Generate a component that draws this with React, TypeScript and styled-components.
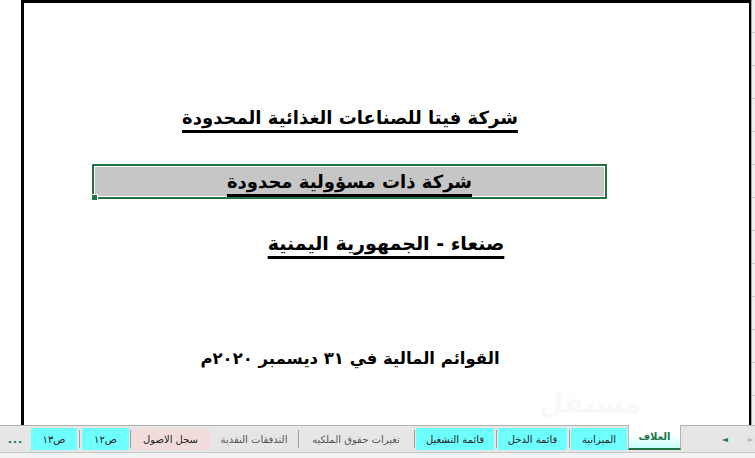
import React from "react";
import styled, { createGlobalStyle } from "styled-components";

const GlobalStyle = createGlobalStyle`
  html, body {
    margin: 0;
    padding: 0;
    background: #ffffff;
    overflow: hidden;
  }
  body {
    font-family: "DejaVu Sans", "Noto Sans", sans-serif;
  }
`;

type SheetTab = {
  label: string;
  color?: "cyan" | "pink" | "plain";
  width: number;
  gapAfter?: number;
  line?: boolean;
};

const tabs: SheetTab[] = [
  { label: "ص١٣", color: "cyan", width: 46, gapAfter: 5, line: true },
  { label: "ص١٢", color: "cyan", width: 47, gapAfter: 2, line: true },
  { label: "سجل الاصول", color: "pink", width: 79 },
  { label: "التدفقات النقدية", color: "plain", width: 88, gapAfter: 1, line: true },
  { label: "تغيرات حقوق الملكيه", color: "plain", width: 114, gapAfter: 3, line: true },
  { label: "قائمة التشغيل", color: "cyan", width: 78, gapAfter: 4, line: true },
  { label: "قائمة الدخل", color: "cyan", width: 69, gapAfter: 4, line: true },
  { label: "الميزانية", color: "cyan", width: 56, gapAfter: 1 },
];

export default function App() {
  return (
    <>
      <GlobalStyle />
      <Window>
        <SheetArea>
          <Frame>
            <Content>
              <TitleRow $top={101}>
                <Heading $size={18} $underline>
                  شركة فيتا للصناعات الغذائية المحدودة
                </Heading>
              </TitleRow>
              <SelectedCell>
                <Heading $size={18} $underline>
                  شركة ذات مسؤولية محدودة
                </Heading>
                <FillHandle />
              </SelectedCell>
              <TitleRow $top={30} $shift={72}>
                <Heading $size={19} $underline>
                  صنعاء - الجمهورية اليمنية
                </Heading>
              </TitleRow>
              <TitleRow $top={88}>
                <Heading $size={16.5}>القوائم المالية في ٣١ ديسمبر ٢٠٢٠م</Heading>
              </TitleRow>
            </Content>
            <Watermark>مستقل</Watermark>
          </Frame>
          <ScrollEdge />
        </SheetArea>
        <TabBar>
          <More>...</More>
          {tabs.map((t) => (
            <React.Fragment key={t.label}>
              <Tab $color={t.color} $width={t.width}>
                {t.label}
              </Tab>
              {t.gapAfter && <Separator $gap={t.gapAfter} $line={t.line} />}
            </React.Fragment>
          ))}
          <ActiveTab>الغلاف</ActiveTab>
          <NavArea>
            <NavArrow $enabled>◄</NavArrow>
            <NavArrow>►</NavArrow>
          </NavArea>
        </TabBar>
        <StatusStrip />
      </Window>
    </>
  );
}

const Window = styled.div`
  width: 755px;
  height: 458px;
  display: flex;
  flex-direction: column;
  overflow: hidden;
`;

const SheetArea = styled.div`
  height: 425px;
  display: flex;
  padding-left: 21px;
  box-sizing: border-box;
`;

const Frame = styled.div`
  position: relative;
  flex: 1;
  border-top: 3px solid #000;
  border-left: 3px solid #000;
  border-right: 2px solid #000;
  overflow: hidden;
`;

const Content = styled.div`
  width: 514px;
  margin-left: 69px;
  display: flex;
  flex-direction: column;
`;

const TitleRow = styled.div<{ $top: number; $shift?: number }>`
  margin-top: ${(p) => p.$top}px;
  padding-left: ${(p) => p.$shift ?? 0}px;
  display: flex;
  justify-content: center;
`;

const Heading = styled.span<{ $size: number; $underline?: boolean }>`
  direction: rtl;
  font-family: "DejaVu Sans", sans-serif;
  font-weight: 700;
  font-size: ${(p) => p.$size}px;
  line-height: 28px;
  color: #000;
  white-space: nowrap;
  text-decoration: ${(p) => (p.$underline ? "underline" : "none")};
  text-decoration-thickness: 3px;
  text-underline-offset: 6px;
`;

const SelectedCell = styled.div`
  position: relative;
  margin-top: 32px;
  margin-left: -1px;
  height: 35px;
  box-sizing: border-box;
  border: 2px solid #217346;
  box-shadow: inset 0 0 0 1px #ffffff;
  background: #c6c6c6;
  display: flex;
  align-items: center;
  justify-content: center;
`;

const FillHandle = styled.span`
  position: absolute;
  left: -3px;
  bottom: -4px;
  width: 5px;
  height: 5px;
  background: #217346;
  border: 1px solid #ffffff;
`;

const Watermark = styled.span`
  position: absolute;
  left: 515px;
  top: 384px;
  font-family: "DejaVu Sans", sans-serif;
  font-weight: 700;
  font-size: 28px;
  color: #f8f8f8;
  pointer-events: none;
`;

const ScrollEdge = styled.div`
  width: 3px;
  border-left: 1px solid #a6a6a6;
  background: repeating-linear-gradient(
    to bottom,
    #f0f0f0 0,
    #f0f0f0 32px,
    #c8c8c8 32px,
    #c8c8c8 33px
  );
`;

const TabBar = styled.div`
  height: 27px;
  box-sizing: border-box;
  border-top: 1px solid #b4b4b4;
  background: #e6e6e6;
  display: flex;
  align-items: flex-start;
  font-family: "DejaVu Sans", sans-serif;
  font-size: 10px;
`;

const More = styled.div`
  width: 31px;
  height: 22px;
  margin-top: 2px;
  flex: none;
  display: flex;
  align-items: center;
  justify-content: center;
  color: #217346;
  font-weight: 700;
  font-size: 11px;
  letter-spacing: 1px;
`;

const tabBg = {
  cyan: "#6effff",
  pink: "#f2dcdb",
  plain: "transparent",
};

const Tab = styled.div<{ $color?: "cyan" | "pink" | "plain"; $width: number }>`
  width: ${(p) => p.$width}px;
  height: 22px;
  margin-top: 2px;
  flex: none;
  background: ${(p) => tabBg[p.$color ?? "plain"]};
  display: flex;
  align-items: center;
  justify-content: center;
  direction: rtl;
  white-space: nowrap;
  color: ${(p) => (p.$color === "plain" ? "#555" : "#222")};
  overflow: hidden;
`;

const Separator = styled.div<{ $gap: number; $line?: boolean }>`
  width: ${(p) => p.$gap}px;
  height: 18px;
  margin-top: 4px;
  flex: none;
  display: flex;
  justify-content: center;

  &::after {
    content: "";
    width: 1px;
    height: 100%;
    background: ${(p) => (p.$line ? "#a0a0a0" : "transparent")};
  }
`;

const ActiveTab = styled.div`
  width: 53px;
  height: 25px;
  margin-top: -1px;
  flex: none;
  box-sizing: border-box;
  border-left: 1px solid #b4b4b4;
  border-right: 1px solid #b4b4b4;
  border-bottom: 2px solid #217346;
  background: linear-gradient(to bottom, #ffffff 40%, #c8ffff 100%);
  display: flex;
  align-items: center;
  justify-content: center;
  direction: rtl;
  color: #217346;
  font-weight: 700;
`;

const NavArea = styled.div`
  flex: 1;
  height: 26px;
  display: flex;
  align-items: center;
  justify-content: flex-end;
  gap: 20px;
  padding-right: 1px;
`;

const NavArrow = styled.span<{ $enabled?: boolean }>`
  font-size: 8px;
  color: ${(p) => (p.$enabled ? "#217346" : "#bdbdbd")};
`;

const StatusStrip = styled.div`
  flex: 1;
  border-top: 1px solid #c6c6c6;
  background: #f3f3f3;
`;
